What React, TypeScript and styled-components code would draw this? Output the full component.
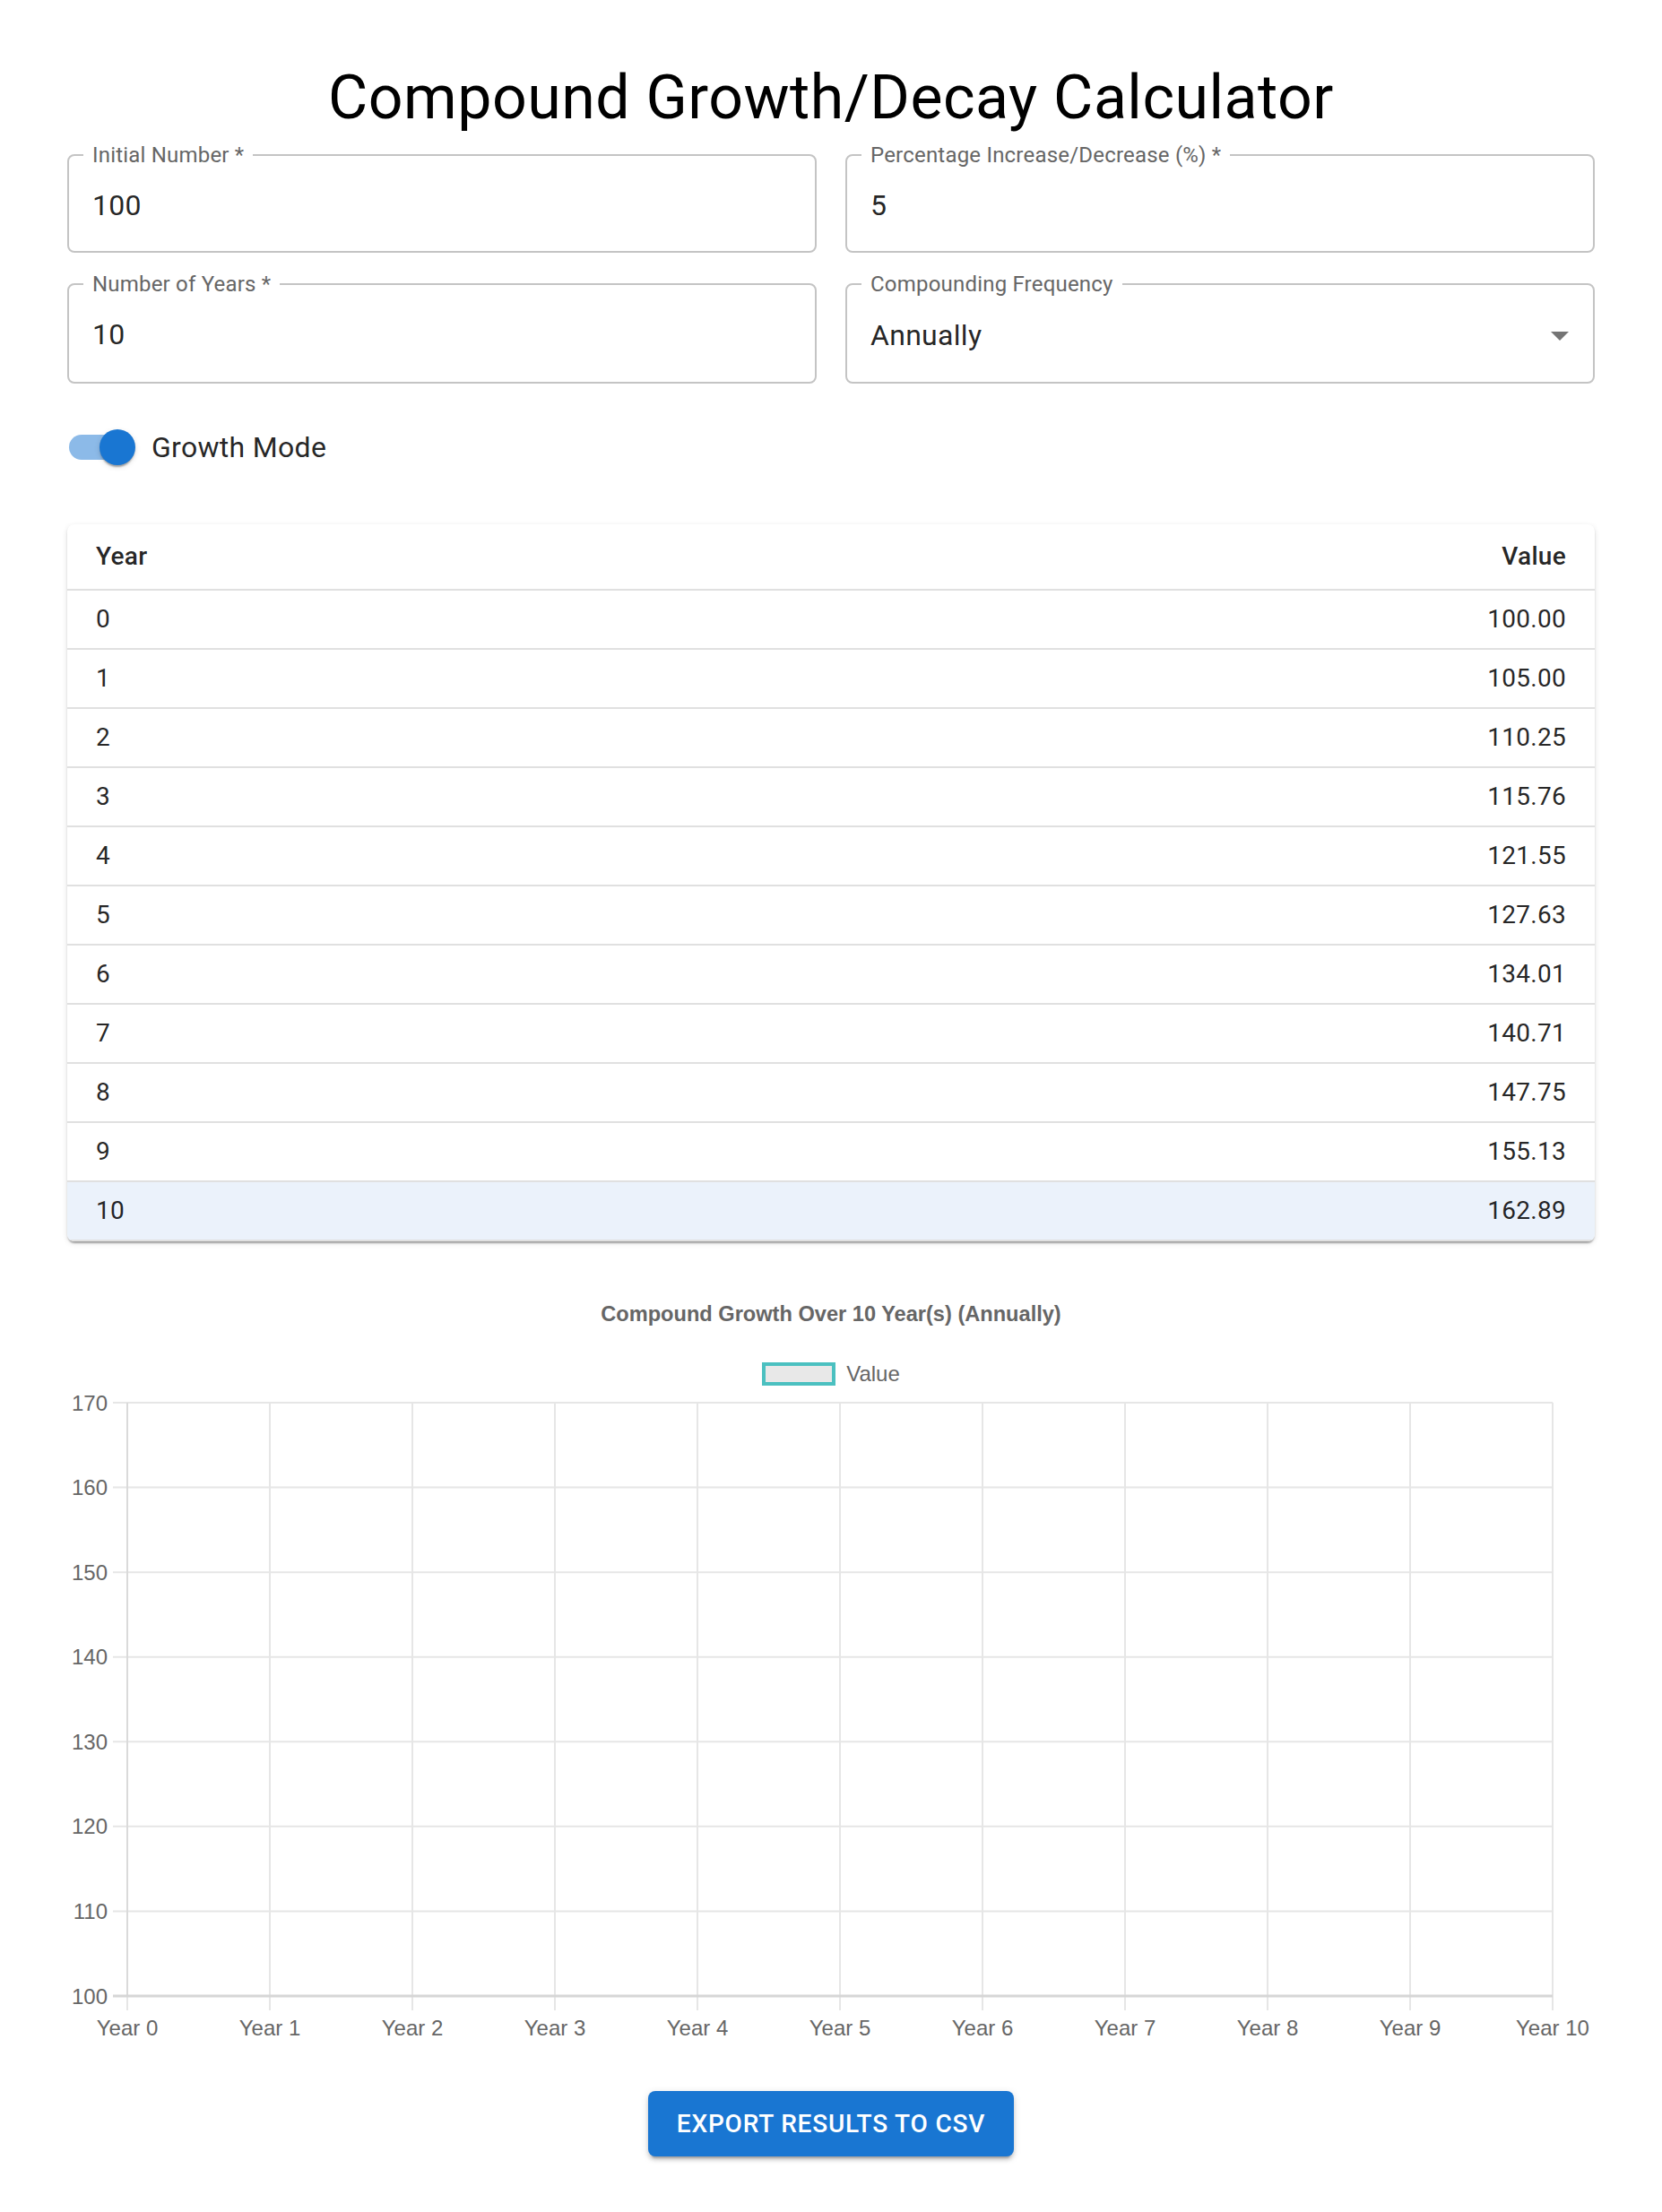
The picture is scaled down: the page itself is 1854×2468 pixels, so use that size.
import React from 'react';
import styled, { createGlobalStyle } from 'styled-components';

const Global = createGlobalStyle`
  html, body { margin: 0; padding: 0; background: #fff; }
  body {
    font-family: Roboto, "Liberation Sans", Arial, sans-serif;
    color: rgba(0, 0, 0, 0.87);
  }
  * { box-sizing: border-box; }
`;

const Page = styled.main`
  width: 1704px;
  margin: 0 auto;
  padding: 67px 0 63px;
  display: flex;
  flex-direction: column;
`;

const Title = styled.h1`
  margin: 0;
  font-size: 68px;
  font-weight: 400;
  line-height: 84px;
  letter-spacing: 0.5px;
  text-align: center;
  color: #000;
`;

const FieldGrid = styled.div`
  margin-top: 10px;
  display: grid;
  grid-template-columns: 1fr 1fr;
  column-gap: 32px;
  row-gap: 23px;
`;

const Field = styled.fieldset`
  margin: 0;
  min-width: 0;
  border: 2px solid #c4c4c4;
  border-radius: 8px;
  padding: 0 16px;
`;

const FieldLabel = styled.legend`
  padding: 0 10px;
  font-size: 24px;
  line-height: 24px;
  color: #666;
  letter-spacing: 0.2px;
`;

const FieldValue = styled.div`
  display: flex;
  align-items: center;
  justify-content: space-between;
  padding: 21px 12px 28px 10px;
  font-size: 32px;
  line-height: 46px;
  color: rgba(0, 0, 0, 0.87);
  letter-spacing: 0.3px;
`;

const Caret = styled.svg`
  width: 48px;
  height: 48px;
  margin-right: -15px;
  fill: #757575;
  flex: none;
`;

const SwitchRow = styled.label`
  display: flex;
  align-items: center;
  height: 76px;
  margin: 33px 0 0 -22px;
  font-size: 32px;
  line-height: 48px;
  letter-spacing: 0.3px;
  color: rgba(0, 0, 0, 0.87);
`;

const SwitchBase = styled.span`
  position: relative;
  flex: none;
  width: 116px;
  height: 76px;
  padding: 24px;
  display: flex;
  align-items: center;
`;

const Track = styled.span`
  width: 68px;
  height: 28px;
  border-radius: 14px;
  background: #1976d2;
  opacity: 0.5;
`;

const Thumb = styled.span`
  position: absolute;
  left: 58px;
  top: 18px;
  width: 40px;
  height: 40px;
  border-radius: 50%;
  background: #1976d2;
  box-shadow: 0 4px 2px -2px rgba(0, 0, 0, 0.2), 0 2px 2px 0 rgba(0, 0, 0, 0.14),
    0 2px 6px 0 rgba(0, 0, 0, 0.12);
`;

const Paper = styled.div`
  margin-top: 48px;
  border-radius: 8px;
  background: #fff;
  overflow: hidden;
  box-shadow: 0 4px 2px -2px rgba(0, 0, 0, 0.2), 0 2px 2px 0 rgba(0, 0, 0, 0.14),
    0 2px 6px 0 rgba(0, 0, 0, 0.12);
`;

const Table = styled.table`
  width: 100%;
  border-collapse: collapse;
`;

const HeadCell = styled.th<{ $right?: boolean }>`
  padding: 12px 32px;
  font-size: 28px;
  font-weight: 500;
  line-height: 48px;
  letter-spacing: 0.3px;
  text-align: ${(p) => (p.$right ? 'right' : 'left')};
  border-bottom: 2px solid #e0e0e0;
  color: rgba(0, 0, 0, 0.87);
`;

const Row = styled.tr<{ $highlight?: boolean }>`
  background: ${(p) => (p.$highlight ? '#ebf2fb' : 'transparent')};
`;

const Cell = styled.td<{ $right?: boolean }>`
  padding: 12px 32px;
  font-size: 28px;
  line-height: 40px;
  letter-spacing: 0.3px;
  text-align: ${(p) => (p.$right ? 'right' : 'left')};
  border-bottom: 2px solid #e0e0e0;
  color: rgba(0, 0, 0, 0.87);
`;

const ChartTitle = styled.div`
  margin-top: 67px;
  font-family: "Liberation Sans", Arial, sans-serif;
  font-size: 23.6px;
  font-weight: 700;
  line-height: 28px;
  text-align: center;
  color: #666;
`;

const Legend = styled.div`
  margin-top: 39px;
  height: 28px;
  display: flex;
  align-items: center;
  justify-content: center;
  gap: 12px;
  font-family: "Liberation Sans", Arial, sans-serif;
  font-size: 24px;
  color: #666;
`;

const LegendBox = styled.span`
  width: 82px;
  height: 26px;
  border: 4px solid rgb(75, 192, 192);
  background: #e8e8e8;
`;

const Plot = styled.svg`
  display: block;
  margin-top: 3px;
  width: 1704px;
  height: 735px;
  font-family: "Liberation Sans", Arial, sans-serif;
`;

const ExportButton = styled.button`
  align-self: center;
  margin-top: 48px;
  padding: 12px 32px;
  border: 0;
  border-radius: 8px;
  background: #1976d2;
  color: #fff;
  font-family: Roboto, "Liberation Sans", Arial, sans-serif;
  font-size: 28px;
  font-weight: 500;
  line-height: 49px;
  letter-spacing: 0.8px;
  text-transform: uppercase;
  box-shadow: 0 6px 2px -4px rgba(0, 0, 0, 0.2), 0 4px 4px 0 rgba(0, 0, 0, 0.14),
    0 2px 10px 0 rgba(0, 0, 0, 0.12);
  cursor: pointer;
`;

const rows = [
  '100.00', '105.00', '110.25', '115.76', '121.55', '127.63',
  '134.01', '140.71', '147.75', '155.13', '162.89',
];

const X0 = 67;
const XSTEP = 159;
const Y0 = 15;
const YSPAN = 662;
const yTicks = [170, 160, 150, 140, 130, 120, 110, 100];

function Chart() {
  const ystep = YSPAN / 7;
  const xEnd = X0 + XSTEP * 10;
  const yEnd = Y0 + YSPAN;
  return (
    <Plot viewBox="0 0 1704 735">
      {Array.from({ length: 11 }, (_, i) => (
        <line
          key={`v${i}`}
          x1={X0 + XSTEP * i}
          x2={X0 + XSTEP * i}
          y1={Y0}
          y2={yEnd + 16}
          stroke="#e6e6e6"
          strokeWidth={2}
        />
      ))}
      {yTicks.map((t, j) => (
        <line
          key={`h${t}`}
          x1={X0 - 16}
          x2={xEnd}
          y1={Y0 + ystep * j}
          y2={Y0 + ystep * j}
          stroke="#e6e6e6"
          strokeWidth={2}
        />
      ))}
      <line x1={X0} x2={X0} y1={Y0} y2={yEnd} stroke="#dadada" strokeWidth={2} />
      <line x1={X0 - 16} x2={xEnd} y1={yEnd} y2={yEnd} stroke="#d6d6d6" strokeWidth={3} />
      {yTicks.map((t, j) => (
        <text
          key={`yl${t}`}
          x={45}
          y={Y0 + ystep * j}
          textAnchor="end"
          dominantBaseline="central"
          fontSize={24}
          fill="#666"
        >
          {t}
        </text>
      ))}
      {Array.from({ length: 11 }, (_, i) => (
        <text
          key={`xl${i}`}
          x={X0 + XSTEP * i}
          y={712}
          textAnchor="middle"
          dominantBaseline="central"
          fontSize={24}
          fill="#666"
        >
          {`Year ${i}`}
        </text>
      ))}
    </Plot>
  );
}

export default function App() {
  return (
    <>
      <Global />
      <Page>
        <Title>Compound Growth/Decay Calculator</Title>
        <FieldGrid>
          <Field>
            <FieldLabel>Initial Number *</FieldLabel>
            <FieldValue>100</FieldValue>
          </Field>
          <Field>
            <FieldLabel>Percentage Increase/Decrease (%) *</FieldLabel>
            <FieldValue>5</FieldValue>
          </Field>
          <Field>
            <FieldLabel>Number of Years *</FieldLabel>
            <FieldValue>10</FieldValue>
          </Field>
          <Field>
            <FieldLabel>Compounding Frequency</FieldLabel>
            <FieldValue>
              <span>Annually</span>
              <Caret viewBox="0 0 24 24">
                <path d="M7 10l5 5 5-5z" />
              </Caret>
            </FieldValue>
          </Field>
        </FieldGrid>

        <SwitchRow>
          <SwitchBase>
            <Track />
            <Thumb />
          </SwitchBase>
          Growth Mode
        </SwitchRow>

        <Paper>
          <Table>
            <thead>
              <tr>
                <HeadCell>Year</HeadCell>
                <HeadCell $right>Value</HeadCell>
              </tr>
            </thead>
            <tbody>
              {rows.map((v, i) => (
                <Row key={i} $highlight={i === rows.length - 1}>
                  <Cell>{i}</Cell>
                  <Cell $right>{v}</Cell>
                </Row>
              ))}
            </tbody>
          </Table>
        </Paper>

        <ChartTitle>Compound Growth Over 10 Year(s) (Annually)</ChartTitle>
        <Legend>
          <LegendBox />
          <span>Value</span>
        </Legend>
        <Chart />

        <ExportButton>Export Results to CSV</ExportButton>
      </Page>
    </>
  );
}
